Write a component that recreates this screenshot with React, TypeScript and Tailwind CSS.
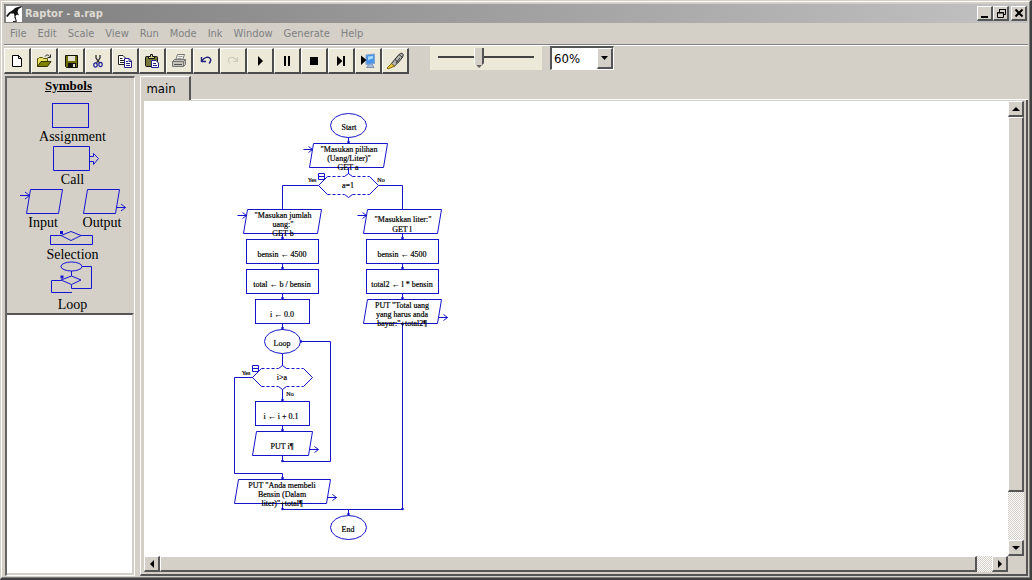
import React from "react";

const UI = "font-['DejaVu_Sans_Condensed','DejaVu_Sans',sans-serif]";
const RAISED =
  "bg-[#d4d0c8] border-t border-l border-t-white border-l-white border-r-2 border-b-2 border-r-[#555] border-b-[#555]";
const CHECKER =
  "bg-[repeating-conic-gradient(#d4d0c8_0_25%,#ffffff_0_50%)] [background-size:2px_2px]";

/* ---------- toolbar ---------- */

const tools: { name: string; icon: React.ReactNode }[] = [
  {
    name: "New",
    icon: <path d="M3.5 2.5H9.5L12.5 5.5V13.5H3.5ZM9.5 2.5V5.5H12.5" fill="#fff" stroke="#000" />,
  },
  {
    name: "Open",
    icon: (
      <>
        <path d="M1.5 13.5V5.5H2.5L3.5 4.5H6.5L7.5 5.5H11.5V8" fill="#e8e060" stroke="#555500" />
        <path d="M1.5 13.5L5 8.5H15L11.5 13.5Z" fill="#808000" stroke="#333300" />
        <path d="M9 3.5C10 1.5 12.5 1.5 13.5 3.5M14.5 1.5V4.5H11.5" fill="none" stroke="#222" />
      </>
    ),
  },
  {
    name: "Save",
    icon: (
      <>
        <path d="M2.5 2.5H14.5V14.5H3.5L2.5 13.5Z" fill="#707000" stroke="#111100" />
        <rect x="5" y="3" width="7" height="5" fill="#e4e2d2" />
        <rect x="5" y="10" width="8" height="4" fill="#111" />
        <rect x="10" y="11" width="2" height="3" fill="#e4e2d2" />
      </>
    ),
  },
  {
    name: "Cut",
    icon: (
      <>
        <path d="M6 2V5L9.5 10M10 2V5L6.5 10" fill="none" stroke="#222" strokeWidth="1.2" />
        <ellipse cx="5.5" cy="12" rx="1.7" ry="2.2" fill="none" stroke="#22229a" strokeWidth="1.2" />
        <ellipse cx="10.5" cy="11.5" rx="1.7" ry="2.2" fill="none" stroke="#22229a" strokeWidth="1.2" />
      </>
    ),
  },
  {
    name: "Copy",
    icon: (
      <>
        <path d="M1.5 2.5H6L8.5 5V11.5H1.5ZM3 5.5H5.5M3 7.5H7M3 9.5H7" fill="#fff" stroke="#222" />
        <path d="M7.5 5.5H12L14.5 8V14.5H7.5ZM12 5.5V8.5H14.5M9 8.5H11M9 10.5H13M9 12.5H13" fill="#fff" stroke="#22228a" />
      </>
    ),
  },
  {
    name: "Paste",
    icon: (
      <>
        <rect x="1.5" y="3.5" width="12" height="10" rx="1" fill="#77773a" stroke="#111" />
        <path d="M4.5 5.5V3.5H6.5V1.5H8.5V3.5H10.5V5.5Z" fill="#d8d490" stroke="#111" />
        <path d="M7.5 7.5H12L14.5 10V14.5H7.5ZM9 10.5H12M9 12.5H13" fill="#fff" stroke="#22228a" />
      </>
    ),
  },
  {
    name: "Print",
    icon: (
      <>
        <path d="M4.5 7.5L6.5 1.5H13.5L11.5 7.5" fill="#f4f3ea" stroke="#777" />
        <path d="M7.5 3.5H11.5M6.5 5.5H10.5" stroke="#999" />
        <path d="M1.5 8.5L3.5 6.5H14.5V11.5L12.5 13.5H1.5ZM1.5 8.5H12.5V13.5M12.5 8.5L14.5 6.5" fill="#c4c2b8" stroke="#777" />
        <path d="M3 11.5H11" stroke="#555" />
      </>
    ),
  },
  {
    name: "Undo",
    icon: (
      <path d="M3.5 4V8.5H8M4 8C6 4 11 3 12.5 6C13.3 8 12 9.5 11 10.5" fill="none" stroke="#22227c" strokeWidth="1.4" />
    ),
  },
  {
    name: "Redo",
    icon: (
      <path d="M12.5 4V8.5H8M12 8C10 4 5 3 3.5 6C2.7 8 4 9.5 5 10.5" fill="none" stroke="#cfccbd" strokeWidth="1.2" />
    ),
  },
  { name: "Run", icon: <path d="M6 3V13L11 8Z" fill="#000" /> },
  { name: "Pause", icon: <path d="M5 3H7V13H5ZM9 3H11V13H9Z" fill="#000" /> },
  { name: "Stop", icon: <rect x="4" y="4" width="8" height="8" fill="#000" /> },
  { name: "Step", icon: <path d="M4 3V13L9.5 8ZM10 3H12V13H10Z" fill="#000" /> },
  {
    name: "Watch",
    icon: (
      <>
        <path d="M9 11H12L14 14.5H6.5Z" fill="#a9bdd8" stroke="#7f93b5" />
        <path d="M6 2L14.5 1V10.5L6 11.5Z" fill="#4a95e6" stroke="#7ea4d4" />
        <path d="M8 3.5L13 3V5.5L8 7Z" fill="#a8dcff" />
        <path d="M1 2.5V12L6.500 7Z" fill="#000" />
      </>
    ),
  },
  {
    name: "Pen",
    icon: (
      <>
        <path d="M4 11L12 1.5C13.5-.5 17 0 16 3C15.5 5 10 11 7.5 13L4.5 13.5Z" fill="#b4b4b0" stroke="#222" />
        <path d="M12 1.5L15.5 4.5M8 6.5L11.5 9.5M13 5L9 10" fill="none" stroke="#333" />
        <path d="M4.5 10.5L7.5 13.2L1 16L0 15Z" fill="#e8c83a" stroke="#665500" strokeWidth=".8" />
      </>
    ),
  },
];

function ToolButton({ name, icon }: { name: string; icon: React.ReactNode }) {
  return (
    <button
      type="button"
      aria-label={name}
      className="flex h-[26px] w-[27px] items-center justify-center border-t border-l border-r-2 border-b-2 border-t-white border-l-white border-r-[#4c4c4c] border-b-[#4c4c4c] bg-[#ece9d8]"
    >
      <svg className="size-4 overflow-visible" viewBox="0 0 16 16" aria-hidden="true">
        {icon}
      </svg>
    </button>
  );
}

function Toolbar() {
  return (
    <div className="flex h-[31px] items-start border-t border-white">
      <div className="flex pt-[2px]">
        {tools.map((t) => (
          <ToolButton key={t.name} {...t} />
        ))}
      </div>
      <div className="ml-[21px] flex h-6 w-28 shrink-0 items-center bg-[#ece9d8] px-2">
        <input
          type="range"
          aria-label="Speed"
          min={0}
          max={100}
          defaultValue={42}
          className="h-5 w-full appearance-none bg-[linear-gradient(#444,#444)] [background-position:0_8px] [background-size:100%_2px] bg-no-repeat [&::-webkit-slider-thumb]:h-5 [&::-webkit-slider-thumb]:w-[10px] [&::-webkit-slider-thumb]:appearance-none [&::-webkit-slider-thumb]:bg-[linear-gradient(transparent_17px,#666_17px),linear-gradient(90deg,#fff_1px,#d4d0c8_1px_8px,#555_8px)] [&::-webkit-slider-thumb]:[clip-path:polygon(0_0,100%_0,100%_75%,50%_100%,0_75%)]"
        />
      </div>
      <div className="relative ml-2 h-6 w-16 shrink-0 border-t-2 border-l-2 border-r border-b border-t-[#555] border-l-[#555] border-r-white border-b-white bg-white">
        <select
          aria-label="Zoom"
          defaultValue="60%"
          className={`block h-full w-full appearance-none bg-white pl-[2px] text-[13px] leading-5 text-black ${UI}`}
        >
          <option>40%</option>
          <option>60%</option>
          <option>80%</option>
          <option>100%</option>
        </select>
        <span className={`pointer-events-none absolute inset-y-0 right-0 flex w-4 items-center justify-center ${RAISED}`}>
          <svg className="h-1 w-[7px]" viewBox="0 0 7 4" aria-hidden="true">
            <path d="M0 0H7L3.5 4Z" />
          </svg>
        </span>
      </div>
    </div>
  );
}

/* ---------- window frame ---------- */

function CaptionButton({ label, children }: { label: string; children: React.ReactNode }) {
  return (
    <button type="button" aria-label={label} className={`flex h-[15px] w-4 items-center justify-center ${RAISED}`}>
      <svg className="size-[10px]" viewBox="0 0 10 10" fill="none" stroke="#000" aria-hidden="true">
        {children}
      </svg>
    </button>
  );
}

function TitleBar() {
  return (
    <header className="flex h-[19px] items-center bg-linear-to-r from-[#808080] to-[#c2c2c2] pr-px pl-[2px]">
      <svg className="size-4 shrink-0 bg-white" viewBox="0 0 16 16" aria-hidden="true">
        <path d="M0 10L3 6.5L7 4L9 2L12 1L15.500 0L16 1L12.500 3L11.500 6L13 9.500L11 8.500L9.500 10V15.500L8.500 11L8 7.500L4.500 7.500L1.500 11Z" fill="#111" />
        <path d="M9 11L10.500 15.500H7" fill="none" stroke="#222" />
      </svg>
      <h1 className={`flex-1 pl-[3px] text-[11px] leading-[19px] font-bold text-[#dedbd3] ${UI}`}>Raptor - a.rap</h1>
      <div className="flex">
        <CaptionButton label="Minimize">
          <path d="M1 9H8" strokeWidth="2" />
        </CaptionButton>
        <CaptionButton label="Restore">
          <path d="M3.5 4V1.5H9.5V6.5H7M3 1.500H10M1.5 4.5H7.500V9.5H1.5ZM1 5H8" />
        </CaptionButton>
        <div className="ml-[2px] flex">
          <CaptionButton label="Close">
            <path d="M1.500 1.500L8.5 8.5M8.5 1.500L1.500 8.5" strokeWidth="2" />
          </CaptionButton>
        </div>
      </div>
    </header>
  );
}

const menus = ["File", "Edit", "Scale", "View", "Run", "Mode", "Ink", "Window", "Generate", "Help"];

function MenuBar() {
  return (
    <nav className={`flex h-[22px] items-center gap-[11px] border-b border-[#808080] pl-[6px] text-[11px] text-[#808080] ${UI}`}>
      {menus.map((m) => (
        <button key={m} type="button" className="leading-5">
          {m}
        </button>
      ))}
    </nav>
  );
}

/* ---------- symbol palette ---------- */

function PaletteItem({ label, width, viewBox, tall, children }: {
  label: string;
  width: string;
  viewBox: string;
  tall: string;
  children: React.ReactNode;
}) {
  return (
    <button type="button" className="flex flex-col items-center">
      <svg className={`${width} ${tall} overflow-visible`} viewBox={viewBox} fill="none" stroke="#1414d2" aria-hidden="true">
        {children}
      </svg>
      <span className="text-[14px] leading-4">{label}</span>
    </button>
  );
}

function Palette() {
  return (
    <aside className="flex w-[130px] shrink-0 flex-col border-t-2 border-l-2 border-r border-b border-t-[#666] border-l-[#666] border-r-white border-b-white">
      <div className="flex flex-col items-center pl-1 font-['Liberation_Serif',serif] text-black">
        <h2 className="h-6 pr-2 text-[13px] leading-4 font-bold underline">Symbols</h2>
        <PaletteItem label="Assignment" width="w-[64px]" tall="h-[27px]" viewBox="0 0 64 27">
          <rect x="12.5" y="1.5" width="36" height="24" />
        </PaletteItem>
        <PaletteItem label="Call" width="w-[64px]" tall="h-[27px]" viewBox="0 0 64 27">
          <path d="M12.5 1.5H48.5V25.5H12.5ZM48.5 11.5H52.5V8.5L57.5 13.5L52.5 19.5V16.5H48.5" />
        </PaletteItem>
        <div className="flex gap-[1px]">
          <PaletteItem label="Input" width="w-[58px]" tall="h-[27px]" viewBox="2 0 58 27">
            <path d="M18.5 1.5H50.5L46.5 25.5H14.5ZM8 7.5H17.5M13 4L17.5 7.5L13 11" />
          </PaletteItem>
          <PaletteItem label="Output" width="w-[58px]" tall="h-[27px]" viewBox="1 0 58 27">
            <path d="M15.5 1.5H47.5L43.5 25.5H11.5ZM44 19.5H53.5M49 16L53.5 19.5L49 23" />
          </PaletteItem>
        </div>
        <PaletteItem label="Selection" width="w-[64px]" tall="h-4" viewBox="1 0 64 16">
          <path d="M21 4.5H10.5V13.5H52.5V4.5H41M21 4.5L31 .5L41 4.5L31 9.5Z" />
          <rect x="20.5" y=".5" width="2" height="2" fill="#1414d2" />
        </PaletteItem>
        <PaletteItem label="Loop" width="w-[64px]" tall="h-[34px]" viewBox="1 0 64 34">
          <ellipse cx="31.5" cy="3.5" rx="10.5" ry="4.5" />
          <path d="M42 3.5H51.5V25.5H31.5V22M31.5 8V13L41 17L31.5 21.5L21 17L31.5 13M21 17.500H11.5V29.5H32" />
          <rect x="21" y="13" width="2" height="2" fill="#1414d2" />
        </PaletteItem>
      </div>
      <div className="flex-1 border-t-2 border-r-2 border-b-2 border-t-[#555] border-r-[#d4d0c8] border-b-[#d4d0c8] bg-white" />
    </aside>
  );
}

/* ---------- flowchart ---------- */

const rects: [number, number, number][] = [
  [246.5, 239.5, 72],
  [246.5, 269.5, 72],
  [255.5, 299.5, 54],
  [366.5, 239.5, 72],
  [366.5, 269.5, 72],
  [255.5, 401.5, 54],
];

/* x is the lower left corner, y the top edge; input boxes carry their arrow on the left */
const slants: { x: number; y: number; w: number; input: boolean }[] = [
  { x: 309.5, y: 143.5, w: 74, input: true },
  { x: 243.5, y: 209.5, w: 74, input: true },
  { x: 363.5, y: 209.5, w: 74, input: true },
  { x: 363.5, y: 299.5, w: 74, input: false },
  { x: 252.5, y: 431.5, w: 56, input: false },
  { x: 234.5, y: 479.5, w: 92, input: false },
];

const captions: [number, number, string][] = [
  [349, 130, "Start"],
  [349, 152, '"Masukan pilihan'],
  [349, 161, '(Uang/Liter)"'],
  [348, 170, "GET a"],
  [348, 188, "a=1"],
  [283, 218, '"Masukan jumlah'],
  [283, 227, 'uang:"'],
  [283, 236, "GET b"],
  [403, 222, '"Masukkan liter:"'],
  [402, 232, "GET l"],
  [282, 257, "bensin ← 4500"],
  [402, 257, "bensin ← 4500"],
  [282, 287, "total ← b / bensin"],
  [402, 287, "total2 ← l * bensin"],
  [282, 317, "i ← 0.0"],
  [402, 308, 'PUT "Total uang'],
  [402, 317, "yang harus anda"],
  [402, 326, 'bayar:"+total2¶'],
  [282, 346, "Loop"],
  [282, 380, "i>a"],
  [281, 419, "i ← i + 0.1"],
  [282, 449, "PUT i¶"],
  [282, 488, 'PUT "Anda membeli'],
  [282, 497, "Bensin (Dalam"],
  [282, 506, 'liter)"+total¶'],
  [348, 532, "End"],
];

const branches: [number, number, string][] = [
  [312, 182, "Yes"],
  [381, 182, "No"],
  [246, 375, "Yes"],
  [290, 396, "No"],
];

const joints: [number, number][] = [
  [348.5, 142], [282.5, 238], [282.5, 268], [282.5, 298], [282.5, 328], [402.5, 238],
  [402.5, 268], [402.5, 298], [282.5, 400], [282.5, 430], [282.5, 461], [282.5, 478],
  [282.5, 509], [402.5, 509], [402.5, 324], [301, 341.5], [348.5, 514],
];

function Decision({ x, y }: { x: number; y: number }) {
  return (
    <g>
      <path d={`M${x - 21} ${y - 9}L${x - 30} ${y}L${x - 21} ${y + 9}M${x + 21} ${y - 9}L${x + 30} ${y}L${x + 21} ${y + 9}`} />
      <path d={`M${x - 21} ${y - 9}H${x - 4}M${x + 4} ${y - 9}H${x + 21}M${x - 21} ${y + 9}H${x - 4}M${x + 4} ${y + 9}H${x + 21}`} strokeDasharray="3 2" />
      <path d={`M${x - 4} ${y - 9}L${x} ${y - 12}L${x + 4} ${y - 9}M${x - 4} ${y + 9}L${x} ${y + 12}L${x + 4} ${y + 9}`} />
      <path d={`M${x - 30} ${y - 12}h6v6h-6zM${x - 30} ${y - 9}h6`} />
    </g>
  );
}

function Flowchart() {
  return (
    <svg className="h-[455px] w-[320px] shrink-0" viewBox="144 101 320 455" role="img" aria-label="Flowchart">
      <g fill="none" stroke="#1414c8">
        <ellipse cx="348.5" cy="125.5" rx="18" ry="12" />
        <ellipse cx="282.5" cy="341.5" rx="18" ry="12" />
        <ellipse cx="348.5" cy="527.5" rx="18" ry="12" />
        {rects.map(([x, y, w]) => (
          <rect key={`${x}-${y}`} x={x} y={y} width={w} height={24} />
        ))}
        {slants.map(({ x, y, w, input }) => {
          const ax = input ? x + 3 : x + w + 10;
          const ay = input ? y + 6 : y + 18;
          return (
            <path
              key={`${x}-${y}`}
              d={`M${x + 4} ${y}h${w}l-4 24h${-w}zM${ax - 9} ${ay}h9M${ax - 4} ${ay - 3}l4 3l-4 3`}
            />
          );
        })}
        <Decision x={348.5} y={185.5} />
        <Decision x={282.5} y={377.5} />
        <path d="M348.5 137.5V143.5M348.5 167.5V174M318.5 185.5H282.5V209.5M378.5 185.5H402.5V209.5" />
        <path d="M282.5 233.5V239.5M282.5 263.5V269.5M282.5 293.5V299.5M282.5 323.5V329.5M402.5 233.5V239.5M402.5 263.5V269.5M402.5 293.5V299.5" />
        <path d="M282.5 353.5V366M282.5 389.5V401.5M282.5 425.5V431.5M282.5 455.5V461.5H330.5V341.5H300.5" />
        <path d="M252.5 377.5H234.5V473.5H282.5V479.5M282.5 503.5V509.5H402.5V323.5M348.5 509.5V515.5" />
      </g>
      <g fill="#1414c8">
        {joints.map(([x, y]) => (
          <circle key={`${x}-${y}`} cx={x} cy={y} r="1.3" />
        ))}
      </g>
      <g fill="#000" stroke="#000" strokeWidth=".2" fontFamily="'Liberation Serif', 'DejaVu Serif', serif" fontSize="8" textAnchor="middle">
        {captions.map(([x, y, t]) => (
          <text key={`${x}-${y}`} x={x} y={y}>
            {t}
          </text>
        ))}
        <g fontSize="6">
          {branches.map(([x, y, t]) => (
            <text key={`${x}-${y}`} x={x} y={y}>
              {t}
            </text>
          ))}
        </g>
      </g>
    </svg>
  );
}

/* ---------- workspace ---------- */

function ScrollButton({ label, d }: { label: string; d: string }) {
  return (
    <button type="button" aria-label={label} className={`flex size-4 shrink-0 items-center justify-center ${RAISED}`}>
      <svg className="size-2" viewBox="0 0 8 8" aria-hidden="true">
        <path d={d} />
      </svg>
    </button>
  );
}

function Workspace() {
  return (
    <main className="flex min-w-0 flex-1 flex-col">
      <div className="flex h-6 shrink-0 items-stretch">
        <button
          type="button"
          className={`w-[51px] border-t border-l border-r-2 border-t-white border-l-white border-r-[#555] pr-2 text-[13px] leading-5 text-black ${UI}`}
        >
          main
        </button>
        <div className="flex-1 border-b border-white" />
      </div>
      <div className="flex min-h-0 flex-1 flex-col border-l border-r-2 border-b-2 border-l-white border-r-[#555] border-b-[#555] pt-px pr-[2px] pb-[2px] pl-[3px]">
        <div className="flex min-h-0 flex-1">
          <div className="min-w-0 flex-1 overflow-hidden bg-white">
            <Flowchart />
          </div>
          <div className={`flex w-4 flex-col ${CHECKER}`}>
            <ScrollButton label="Scroll up" d="M0 6H8L4 2Z" />
            <div className={`flex-[376] ${RAISED}`} />
            <div className="flex-[48]" />
            <ScrollButton label="Scroll down" d="M0 2H8L4 6Z" />
          </div>
        </div>
        <div className="flex h-4 shrink-0">
          <div className={`flex flex-1 ${CHECKER}`}>
            <ScrollButton label="Scroll left" d="M6 0V8L2 4Z" />
            <div className={`flex-[817] ${RAISED}`} />
            <div className="flex-[15]" />
            <ScrollButton label="Scroll right" d="M2 0V8L6 4Z" />
          </div>
          <div className="w-4" />
        </div>
      </div>
    </main>
  );
}

export default function App() {
  return (
    <div className="flex h-screen flex-col border-t border-l border-r-2 border-b-2 border-t-[#d4d0c8] border-l-[#d4d0c8] border-r-[#404040] border-b-[#404040] bg-[#d4d0c8]">
      <div className="flex min-h-0 flex-1 flex-col border-t border-l border-r border-b border-t-white border-l-white border-r-[#808080] border-b-[#808080] pt-[2px] pr-px pb-px pl-[2px]">
        <TitleBar />
        <MenuBar />
        <Toolbar />
        <div className="flex min-h-0 flex-1 gap-[5px] pl-[1px]">
          <Palette />
          <Workspace />
        </div>
      </div>
    </div>
  );
}
